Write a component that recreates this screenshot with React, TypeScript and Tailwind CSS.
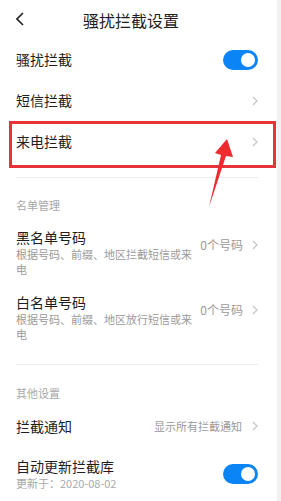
import React from "react";

// small right chevron used on navigable rows
function Chevron() {
  return (
    <svg width="6" height="10" viewBox="0 0 6 10" className="shrink-0">
      <polyline points="1,1 5,5 1,9" fill="none" stroke="#c4c4c4" strokeWidth="1.2" />
    </svg>
  );
}

function Toggle() {
  return (
    <div className="w-[35px] h-[20px] rounded-full bg-[#0b84f5] flex items-center justify-end pr-[3px]">
      <div className="w-[14px] h-[14px] rounded-full bg-white" />
    </div>
  );
}

function Divider() {
  return <div className="h-px bg-[#ececec]" />;
}

export default function App() {
  return (
    <div
      className="relative flex w-[281px] h-[501px] bg-white overflow-hidden"
      style={{ fontFamily: '"Noto Sans CJK SC", "Noto Sans", sans-serif' }}
    >
      <div className="flex-1 pl-[16px] pr-[19px] text-[#1e1e1e]">
        {/* Header */}
        <div className="relative h-[39px] flex items-center justify-center">
          <svg width="8" height="14" viewBox="0 0 8 14" className="absolute left-0 top-[12px]">
            <polyline points="7,1 1,7 7,13" fill="none" stroke="#222" strokeWidth="1.6" />
          </svg>
          <span className="text-[16px] leading-none pr-[12px]">骚扰拦截设置</span>
        </div>

        {/* Main rows */}
        <div className="h-[41px] flex items-center justify-between">
          <span className="text-[14px]">骚扰拦截</span>
          <Toggle />
        </div>
        <div className="h-[41px] flex items-center justify-between">
          <span className="text-[14px]">短信拦截</span>
          <Chevron />
        </div>
        <div className="h-[41px] flex items-center justify-between">
          <span className="text-[14px]">来电拦截</span>
          <Chevron />
        </div>

        <div className="pt-[15px]">
          <Divider />
        </div>

        {/* 名单管理 */}
        <div className="pt-[19px] text-[11px] leading-[16px] text-[#a8a8a8]">名单管理</div>

        <div className="pt-[14px] flex items-center justify-between">
          <div className="w-[180px]">
            <div className="text-[14px] leading-[20px]">黑名单号码</div>
            <div className="text-[11px] leading-[15px] text-[#9a9a9a]">根据号码、前缀、地区拦截短信或来电</div>
          </div>
          <div className="flex items-center gap-[9px] text-[12px] text-[#9a9a9a] mb-[14px]">
            <span>0个号码</span>
            <Chevron />
          </div>
        </div>

        <div className="pt-[15px] flex items-center justify-between">
          <div className="w-[180px]">
            <div className="text-[14px] leading-[20px]">白名单号码</div>
            <div className="text-[11px] leading-[15px] text-[#9a9a9a]">根据号码、前缀、地区放行短信或来电</div>
          </div>
          <div className="flex items-center gap-[9px] text-[12px] text-[#9a9a9a] mb-[14px]">
            <span>0个号码</span>
            <Chevron />
          </div>
        </div>

        <div className="pt-[22px]">
          <Divider />
        </div>

        {/* 其他设置 */}
        <div className="pt-[20px] text-[11px] leading-[16px] text-[#a8a8a8]">其他设置</div>

        <div className="pt-[15px] flex items-center justify-between">
          <span className="text-[14px] leading-[20px]">拦截通知</span>
          <div className="flex items-center gap-[10px] text-[11px] text-[#9a9a9a]">
            <span>显示所有拦截通知</span>
            <Chevron />
          </div>
        </div>

        <div className="pt-[20px] flex items-center justify-between">
          <div>
            <div className="text-[14px] leading-[20px]">自动更新拦截库</div>
            <div className="text-[11px] leading-[15px] text-[#a8a8a8]">更新于：2020-08-02</div>
          </div>
          <Toggle />
        </div>
      </div>

      {/* scrollbar strip */}
      <div className="w-[4px] bg-[#f1f1f1]" />

      {/* annotation: red box and arrow */}
      <div className="absolute left-[9px] top-[121px] w-[267px] h-[47px] border-[3px] border-[#e5343a]" />
      <svg className="absolute left-0 top-0" width="281" height="501" viewBox="0 0 281 501">
        <polygon
          points="227,139 233,157 226,156 209,207 221,155 215,153"
          fill="#ef2b2f"
        />
      </svg>
    </div>
  );
}
